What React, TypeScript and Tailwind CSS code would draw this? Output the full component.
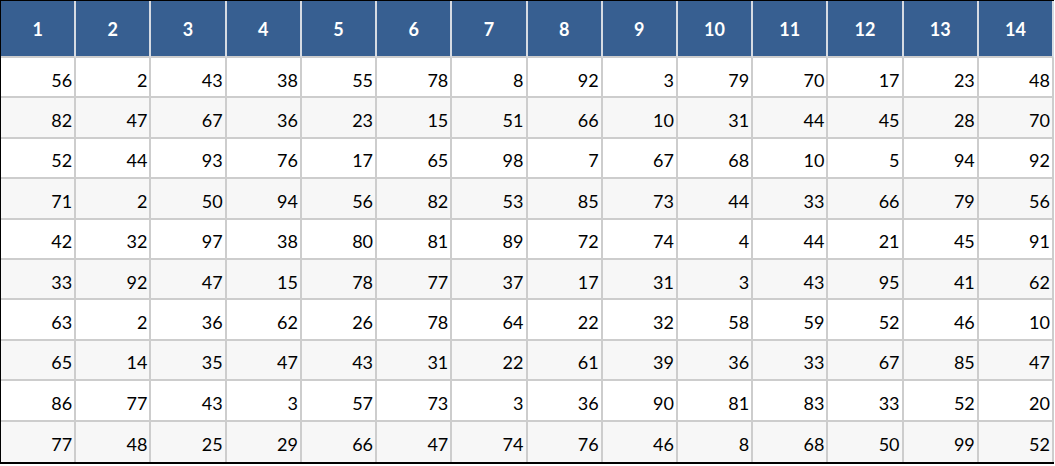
import React from "react";

const data: number[][] = [
  [56, 2, 43, 38, 55, 78, 8, 92, 3, 79, 70, 17, 23, 48],
  [82, 47, 67, 36, 23, 15, 51, 66, 10, 31, 44, 45, 28, 70],
  [52, 44, 93, 76, 17, 65, 98, 7, 67, 68, 10, 5, 94, 92],
  [71, 2, 50, 94, 56, 82, 53, 85, 73, 44, 33, 66, 79, 56],
  [42, 32, 97, 38, 80, 81, 89, 72, 74, 4, 44, 21, 45, 91],
  [33, 92, 47, 15, 78, 77, 37, 17, 31, 3, 43, 95, 41, 62],
  [63, 2, 36, 62, 26, 78, 64, 22, 32, 58, 59, 52, 46, 10],
  [65, 14, 35, 47, 43, 31, 22, 61, 39, 36, 33, 67, 85, 47],
  [86, 77, 43, 3, 57, 73, 3, 36, 90, 81, 83, 33, 52, 20],
  [77, 48, 25, 29, 66, 47, 74, 76, 46, 8, 68, 50, 99, 52],
];

export default function App() {
  return (
    <div className="w-[1055px] h-[466px] bg-white overflow-hidden" style={{ fontFamily: "Lato, 'Open Sans', sans-serif" }}>
      <div className="w-[1054px] border-l border-t border-b-2 border-black">
        <div className="grid grid-cols-14">
          {Array.from({ length: 14 }, (_, i) => (
            <div
              key={i}
              className="h-[57px] bg-[#375f91] border-r-2 border-b-2 border-r-[#d6dbe3] border-b-[#cdcdcd] flex items-center justify-center pt-[2px] text-white font-bold text-[18px]"
            >
              {i + 1}
            </div>
          ))}
          {data.map((row, r) =>
            row.map((v, c) => (
              <div
                key={`${r}-${c}`}
                className={`h-[40.4px] ${r === data.length - 1 ? "" : "border-b-2"} border-r-2 border-[#cdcdcd] flex items-center justify-end pr-[2px] pt-[6px] text-[18px] text-black ${r % 2 === 1 ? "bg-[#f7f7f7]" : "bg-white"}`}
              >
                {v}
              </div>
            ))
          )}
        </div>
      </div>
    </div>
  );
}
